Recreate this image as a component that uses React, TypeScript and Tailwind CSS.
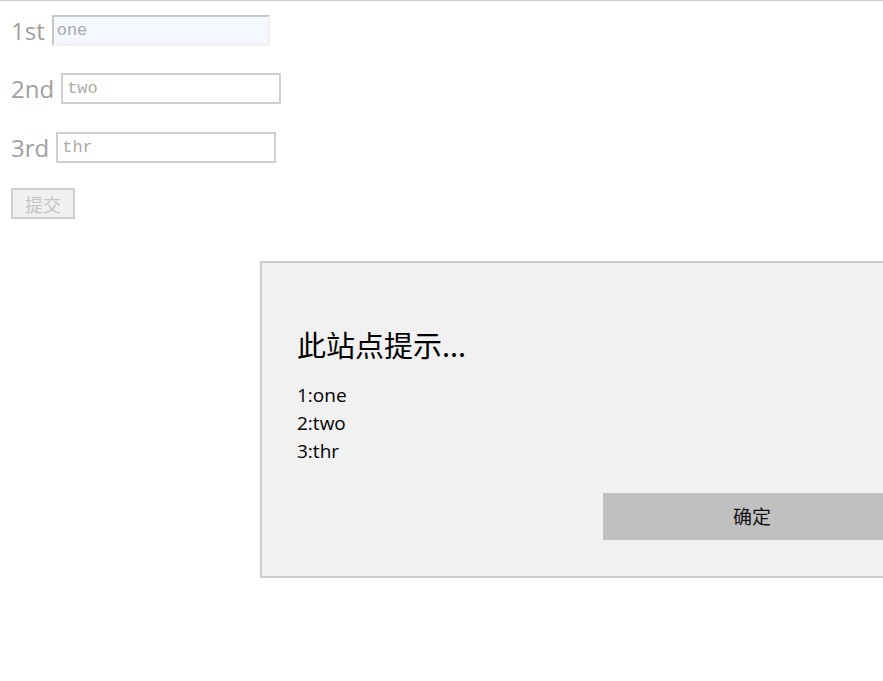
export default function App() {
  const rows = [
    { label: "1st", value: "one", focus: true, mt: "mt-[14px]" },
    { label: "2nd", value: "two", focus: false, mt: "mt-[27px]" },
    { label: "3rd", value: "thr", focus: false, mt: "mt-[28px]" },
  ];

  return (
    <div className="relative h-[681px] w-[883px] overflow-hidden border-t border-[#cccccc] bg-white font-['Segoe_UI','Open_Sans','Noto_Sans_CJK_SC',sans-serif]">
      {/* Form */}
      <div className="flex flex-col items-start pl-[11px]">
        {rows.map((r) => (
          <div key={r.label} className={`flex h-[31px] items-center gap-[7px] ${r.mt}`}>
            <span className="text-[24px] leading-none text-[#a0a0a0]">{r.label}</span>
            <input
              readOnly
              placeholder={r.value}
              className={
                r.focus
                  ? "h-[31px] w-[218px] border-2 border-t-[#c8c8c8] border-l-[#c8c8c8] border-r-[#f0f0f0] border-b-[#f0f0f0] bg-[#f5f9ff] px-[3px] font-['Liberation_Mono','Noto_Sans_CJK_SC',monospace] text-[17px] placeholder:text-[#a8a8a8] outline-none"
                  : "h-[31px] w-[220px] border-2 border-[#cfcfcf] bg-white px-[4px] font-['Liberation_Mono','Noto_Sans_CJK_SC',monospace] text-[17px] placeholder:text-[#b0aaa5] outline-none"
              }
            />
          </div>
        ))}
        <button className="mt-[25px] h-[31px] w-[64px] border-2 border-[#d0d0d0] bg-[#f0f0f0] font-['Noto_Sans_CJK_SC',serif] text-[18px] leading-none text-[#c4c4c4]">
          提交
        </button>
      </div>

      {/* Alert dialog */}
      <div className="absolute left-[260px] top-[260px] h-[317px] w-[680px] border-2 border-[#cccccc] bg-[#f1f1f1] pl-[35px]">
        <div className="mt-[63px] font-['Segoe_UI','Noto_Sans_CJK_SC',sans-serif] text-[29px] leading-[36px] text-black">
          此站点提示...
        </div>
        <div className="mt-[19px] font-['Segoe_UI','Open_Sans',sans-serif] text-[19px] leading-[28px] text-black">
          <div>1:one</div>
          <div>2:two</div>
          <div>3:thr</div>
        </div>
        <div className="mt-[28px] flex">
          <button className="ml-[306px] h-[47px] w-[298px] bg-[#c0c0c0] font-['Noto_Sans_CJK_SC',sans-serif] text-[19px] text-[#111]">
            确定
          </button>
        </div>
      </div>
    </div>
  );
}
